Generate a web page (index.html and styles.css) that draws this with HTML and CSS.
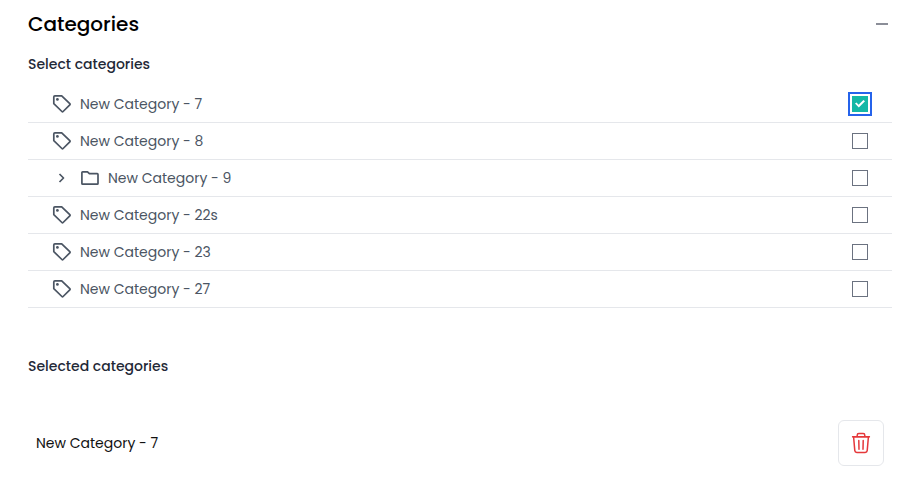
FILE: index.html
```html
<!DOCTYPE html>
<html lang="en">
<head>
<meta charset="utf-8">
<title>Categories</title>
<link rel="stylesheet" href="styles.css">
</head>
<body>
<svg class="sprite" aria-hidden="true">
  <symbol id="tag" viewBox="0 0 20 20">
    <path d="M1.8 2.9Q1.8 1.8 2.9 1.8H9.7L17.8 9.7Q18.4 10.3 17.8 10.9L11.1 17.5Q10.5 18.1 9.9 17.5L1.8 9.7Z"/>
    <circle class="dot" cx="5.4" cy="5.4" r="1.4"/>
  </symbol>
  <symbol id="folder" viewBox="0 0 20 20">
    <path d="M1.9 4.5Q1.9 3.8 2.6 3.8H7.5L9.4 5.7H17.3Q18 5.7 18 6.4V15.5Q18 16.2 17.3 16.2H2.6Q1.9 16.2 1.9 15.5Z"/>
  </symbol>
  <symbol id="chevron" viewBox="0 0 20 20">
    <path d="M7.5 6L11.5 10L7.5 14"/>
  </symbol>
</svg>
<main class="panel">
  <header class="panel-header">
    <h1>Categories</h1>
    <button class="collapse" type="button" aria-label="Collapse"></button>
  </header>
  <h2>Select categories</h2>
  <ul class="tree">
    <li class="row"><svg class="icon"><use href="#tag"/></svg><label for="c7">New Category - 7</label><input class="focused" id="c7" type="checkbox" checked></li>
    <li class="row"><svg class="icon"><use href="#tag"/></svg><label for="c8">New Category - 8</label><input id="c8" type="checkbox"></li>
    <li class="row"><button class="expand" type="button" aria-label="Expand"><svg class="icon"><use href="#chevron"/></svg></button><svg class="icon"><use href="#folder"/></svg><label for="c9">New Category - 9</label><input id="c9" type="checkbox"></li>
    <li class="row"><svg class="icon"><use href="#tag"/></svg><label for="c22">New Category - 22s</label><input id="c22" type="checkbox"></li>
    <li class="row"><svg class="icon"><use href="#tag"/></svg><label for="c23">New Category - 23</label><input id="c23" type="checkbox"></li>
    <li class="row"><svg class="icon"><use href="#tag"/></svg><label for="c27">New Category - 27</label><input id="c27" type="checkbox"></li>
  </ul>
  <h2 class="selected-title">Selected categories</h2>
  <ul class="selected">
    <li><span>New Category - 7</span>
      <button class="delete" type="button" aria-label="Remove New Category - 7">
        <svg viewBox="0 0 24 24">
          <path d="M4 5.8H20M8.2 5.5V4.3Q8.2 2.6 9.9 2.6H14.1Q15.8 2.6 15.8 4.3V5.5M4.6 6L5.8 19.6Q6 21.4 7.8 21.4H16.2Q18 21.4 18.2 19.6L19.4 6M9.8 9.6L10 18.2M14.2 9.6L14 18.2"/>
          <path d="M3.6 5.8H20.4"/>
        </svg>
      </button>
    </li>
  </ul>
</main>
</body>
</html>
```
FILE: styles.css
```css
* { box-sizing: border-box; }

body {
  margin: 0;
  background: #fff;
  color: #111;
  font: 400 14px/24px Poppins, Inter, sans-serif;
}

button {
  padding: 0;
  border: 0;
  background: none;
  cursor: pointer;
}

.sprite {
  position: absolute;
  width: 0;
  height: 0;
}

.panel { padding: 8px 17px 0 28px; }

.panel-header {
  display: flex;
  align-items: center;
  justify-content: space-between;
  height: 32px;
}

h1 {
  margin: 0;
  color: #000;
  font-size: 20px;
  font-weight: 500;
}

.collapse {
  display: grid;
  place-items: center;
  width: 20px;
  height: 32px;
}

.collapse::before {
  content: "";
  width: 12px;
  height: 2px;
  background: #8b8e98;
}

h2 {
  margin: 12px 0 10px;
  color: #1f2937;
  font-size: 14px;
  font-weight: 500;
}

ul {
  margin: 0;
  padding: 0;
  list-style: none;
}

.row {
  display: flex;
  align-items: center;
  gap: 8px;
  height: 37px;
  padding: 0 24px;
  border-bottom: 1px solid #e5e7eb;
  color: #4b5563;
}

.row label { flex: 1; }

.icon {
  display: block;
  width: 20px;
  height: 20px;
  fill: none;
  stroke: #4b5563;
  stroke-width: 1.7;
  stroke-linejoin: round;
}

.dot {
  fill: #4b5563;
  stroke: none;
}

input {
  display: grid;
  place-items: center;
  width: 16px;
  height: 16px;
  margin: 0;
  appearance: none;
  border: 1px solid #6b7280;
  background: #fff;
}

input:checked {
  border-color: #14b8a6;
  background: #14b8a6;
}

input:checked::before {
  content: "";
  width: 10px;
  height: 8px;
  background: #fff;
  clip-path: polygon(0 45%, 15% 30%, 36% 58%, 84% 0, 100% 16%, 38% 94%);
}

.focused {
  outline: 2px solid #2563eb;
  outline-offset: 2px;
}

.selected-title { margin: 46px 0 42px; }

.selected li {
  display: flex;
  align-items: center;
  justify-content: space-between;
  padding: 0 8px;
}

.delete {
  display: grid;
  place-items: center;
  width: 46px;
  height: 46px;
  border: 1px solid #e5e7eb;
  border-radius: 6px;
}

.delete svg {
  width: 24px;
  height: 24px;
  fill: none;
  stroke: #e5383b;
  stroke-width: 1.5;
  stroke-linecap: round;
  stroke-linejoin: round;
}
```
